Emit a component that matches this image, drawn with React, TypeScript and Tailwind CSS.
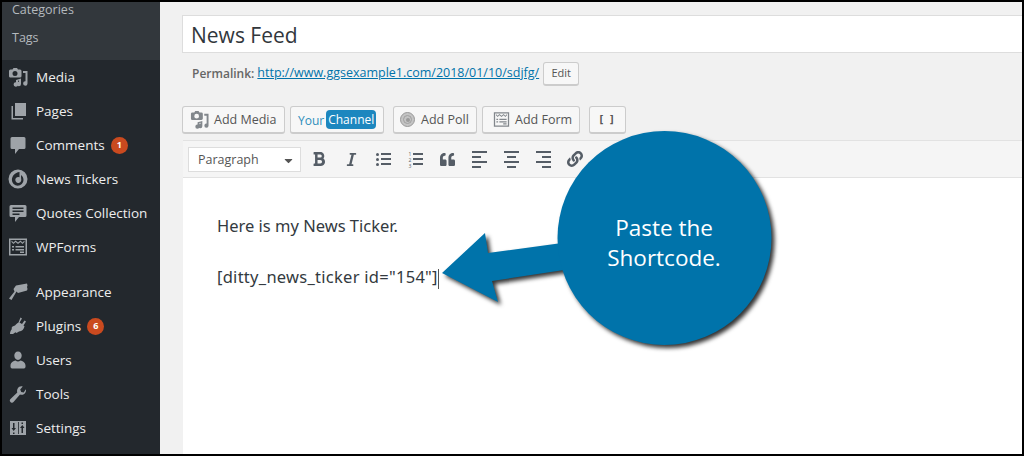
import React from 'react';
import { FaBold, FaItalic, FaQuoteLeft, FaLink, FaCaretDown } from 'react-icons/fa';

const ic = 'w-5 h-5 text-[#9ea3a8] fill-current';

// --- Dashicon style drawings ---
const MediaIcon = ({ className = ic }: { className?: string }) => (
  <svg viewBox="0 0 20 20" className={className}>
    <path fillRule="evenodd" d="M2.500 2.500h2l1-1.500h3.500l1 1.500h2a1.500 1.500 0 0 1 1.500 1.500v5a1.500 1.500 0 0 1-1.500 1.500h-10A1.500 1.500 0 0 1 1 9V4a1.500 1.500 0 0 1 1.500-1.500zM7 4a2.500 2.500 0 1 0 0 5 2.500 2.500 0 0 0 0-5z" />
    <path d="M15 4h4.500v12.500a2.200 2.200 0 1 1-2-2.200V6H15zM8 13l5-1.500v5.500a2.200 2.200 0 1 1-2-2.200v-1.300l-1 .3v3.700a2.200 2.200 0 1 1-2-2.200z" />
  </svg>
);
const PagesIcon = () => (
  <svg viewBox="0 0 20 20" className={ic}>
    <path d="M7 2h11v13H7z" />
    <path d="M5 5v12h10v1.500H3.500V5z" />
  </svg>
);
const CommentIcon = () => (
  <svg viewBox="0 0 20 20" className={ic}>
    <path d="M4 2h12a1.500 1.500 0 0 1 1.500 1.500v9A1.500 1.500 0 0 1 16 14h-5l-4 5v-5H4a1.500 1.500 0 0 1-1.500-1.500v-9A1.500 1.500 0 0 1 4 2z" />
  </svg>
);
const TickerIcon = () => (
  <svg viewBox="0 0 20 20" className={ic}>
    <path fillRule="evenodd" d="M10 .5a9.500 9.500 0 1 1 0 19 9.500 9.500 0 0 1 0-19zM11.500 3v5.200a3 3 0 1 0 1.800 2.800c0-1-.3-1.500-.3-5 1.500 1 2.500 2.800 2.500 5a5.800 5.800 0 0 1-11.600 0c0-4 3-7.500 7.600-8z" />
  </svg>
);
const QuotesIcon = () => (
  <svg viewBox="0 0 20 20" className={ic}>
    <path fillRule="evenodd" d="M3 2h14a1.500 1.500 0 0 1 1.500 1.500v9A1.500 1.500 0 0 1 17 14h-6l-4 5v-5H3a1.500 1.500 0 0 1-1.500-1.500v-9A1.500 1.500 0 0 1 3 2zm1.500 2.500V6h11V4.500zm0 3V9h11V7.500zm0 3V12h7v-1.500z" />
  </svg>
);
const FormsIcon = ({ className = ic }: { className?: string }) => (
  <svg viewBox="0 0 20 20" className={className}>
    <path fillRule="evenodd" d="M1 1.500h18v17H1zm1.500 1.500v14h15V3zm1 .5 2 2 2-2 2.500 2 2.500-2 2 2 2-2v1.500l-2 2-2-2-2.500 2-2.500-2-2 2-2-2zM4 9h2v1.500H4zm3.500 0H16v1.500H7.500zM4 12h2v1.500H4zm3.500 0H16v1.500H7.500zM12 14.500h4V16h-4z" />
  </svg>
);
const BrushIcon = () => (
  <svg viewBox="0 0 20 20" className={ic}>
    <path d="M8 3.500 19 1.500l.5 2-.5 1.500.5 2-.5 1.500-9 2.500-1.500-1.500L3.500 18 1 16.500 6.500 9.500 5.500 7z" />
  </svg>
);
const PlugIcon = () => (
  <svg viewBox="0 0 20 20" className={ic}>
    <path d="M12.500 1.500l1.500 1-2.500 4 2.500 1.500 2.500-3.500 1.500 1-2.500 4 1 .8c-.5 3-2.500 5-5.500 5.200l-2.500 1.500-1-.8L5 18H2c0-2.500 1-4 2-5l-.5-1 1-1.500L7 9.500c1.500-2 3.500-3 3.500-3z" />
  </svg>
);
const UserIcon = () => (
  <svg viewBox="0 0 20 20" className={ic}>
    <path d="M10 1.500c2.300 0 3.700 1.700 3.700 4S12.300 10 10 10 6.300 7.800 6.300 5.500s1.400-4 3.700-4zM2.500 15.500c0-3 3-4.500 5-5 .8.700 1.600 1 2.500 1s1.700-.3 2.500-1c2 .5 5 2 5 5V17c0 .8-1 1.500-2 1.500H4.500c-1 0-2-.7-2-1.500z" />
  </svg>
);
const WrenchIcon = () => (
  <svg viewBox="0 0 20 20" className={ic}>
    <path d="M17.800 5.200c.6 2-.2 4-2 5-1.300.7-2.700.7-3.800.2L5.500 18a2 2 0 0 1-3.200-.3 2 2 0 0 1 .2-2.700l6.800-6.500c-.5-1.200-.3-2.700.4-4 1-1.700 3-2.600 5-2l-2.500 3 1 2.500 2.500.5z" />
  </svg>
);
const SettingsIcon = () => (
  <svg viewBox="0 0 20 20" className={ic}>
    <path fillRule="evenodd" d="M2 3h16v14H2zm3 2v5H3.500L5.700 13 8 10H6.500V5zm0 9.500V16h1.500v-1.500zM13.500 15h1.500v-5h1.500l-2.200-3L12 10h1.500zM13.500 4.500V6H15V4.500zM10 4h.8v12H10z" />
  </svg>
);

const menuTop = [
  { label: 'Media', icon: <MediaIcon /> },
  { label: 'Pages', icon: <PagesIcon /> },
  { label: 'Comments', icon: <CommentIcon />, badge: '1' },
  { label: 'News Tickers', icon: <TickerIcon /> },
  { label: 'Quotes Collection', icon: <QuotesIcon /> },
  { label: 'WPForms', icon: <FormsIcon /> },
];

const menuBottom = [
  { label: 'Appearance', icon: <BrushIcon /> },
  { label: 'Plugins', icon: <PlugIcon />, badge: '6' },
  { label: 'Users', icon: <UserIcon /> },
  { label: 'Tools', icon: <WrenchIcon /> },
  { label: 'Settings', icon: <SettingsIcon /> },
];

type Item = { label: string; icon: React.ReactNode; badge?: string };

function MenuRow({ item }: { item: Item }) {
  return (
    <div className="h-[34px] flex items-center shrink-0">
      <div className="w-[34px] pr-[2px] flex justify-center shrink-0">{item.icon}</div>
      <span className="text-[13.500px] text-[#eeeeee]">{item.label}</span>
      {item.badge && (
        <span className="ml-[6px] w-[17px] h-[17px] rounded-full bg-[#ca4a1f] text-white text-[9px] font-bold flex items-center justify-center">
          {item.badge}
        </span>
      )}
    </div>
  );
}

function Lines({ widths, align }: { widths: number[]; align: string }) {
  return (
    <div className={`w-[15px] flex flex-col gap-[3px] ${align}`}>
      {widths.map((w, i) => (
        <div key={i} className="h-[2px] bg-[#555d66]" style={{ width: w }} />
      ))}
    </div>
  );
}

function ToolBtn({ children }: { children: React.ReactNode }) {
  return <div className="w-[32px] flex justify-center items-center text-[#555d66]">{children}</div>;
}

function MediaBtn({ children, className }: { children: React.ReactNode; className: string }) {
  return (
    <div className={`h-[28px] flex items-center bg-[#f7f7f7] border border-[#cccccc] border-b-2 rounded-[3px] text-[12.500px] text-[#555555] ${className}`}>
      {children}
    </div>
  );
}

export default function App() {
  return (
    <div className="relative w-[1024px] h-[456px] overflow-hidden border-2 border-black flex bg-[#f1f1f1] font-['Open_Sans',sans-serif]">
      {/* --- SIDEBAR --- */}
      <aside className="w-[158px] shrink-0 bg-[#23282d] flex flex-col">
        <div className="h-[58px] shrink-0 bg-[#32373c] flex flex-col text-[12.500px] leading-none text-[#b4b9be]">
          <div className="h-[16px] shrink-0 flex items-center pl-[10px]">Categories</div>
          <div className="h-[24px] mt-[8px] shrink-0 flex items-center pl-[10px]">Tags</div>
        </div>
        {menuTop.map((item) => (
          <MenuRow key={item.label} item={item} />
        ))}
        <div className="h-[11px] shrink-0" />
        {menuBottom.map((item) => (
          <MenuRow key={item.label} item={item} />
        ))}
      </aside>

      {/* --- MAIN --- */}
      <main className="flex-1 min-w-0 pl-[22px] pt-[13px] flex flex-col">
        <div className="h-[38px] pt-[3px] shrink-0 bg-white border border-r-0 border-[#dddddd] flex items-center pl-[8px] text-[21px] text-[#32373c]">
          News Feed
        </div>

        <div className="h-[23px] mt-[9px] shrink-0 pl-[10px] flex items-center text-[12px] text-[#666666]">
          <b className="font-semibold">Permalink:</b>
          <span className="ml-[3px] text-[#0073aa] underline text-[12.500px]">http://www.ggsexample1.com/2018/01/10/sdjfg/</span>
          <span className="ml-[4px] h-[24px] w-[36px] bg-[#f7f7f7] border border-[#cccccc] border-b-2 rounded-[3px] flex items-center justify-center text-[11px] text-[#555555]">
            Edit
          </span>
        </div>

        <div className="mt-[21px] h-[28px] shrink-0 flex">
          <MediaBtn className="w-[103px] pl-[7px] gap-[5px]">
            <MediaIcon className="w-[19px] h-[19px] text-[#82878c] fill-current" />
            <span className="relative top-[1px]">Add Media</span>
          </MediaBtn>
          <MediaBtn className="w-[94px] ml-[5px] pl-[7px]">
            <span className="text-[12px] text-[#2e8dbb] relative top-[1px]">Your</span>
            <span className="ml-[2px] h-[19px] px-[2px] rounded-[4px] bg-[#1d87bf] text-white text-[12px] flex items-center">Channel</span>
          </MediaBtn>
          <MediaBtn className="w-[84px] ml-[9px] pl-[6px] gap-[6px]">
            <span className="w-[15px] h-[15px] rounded-full bg-[#c4c4c4] border border-[#999999] flex items-center justify-center">
              <span className="w-[9px] h-[9px] rounded-full border border-[#a0a0a0] flex items-center justify-center">
                <span className="w-[4px] h-[4px] rounded-full bg-[#9a9a9a]" />
              </span>
            </span>
            <span className="relative top-[1px]">Add Poll</span>
          </MediaBtn>
          <MediaBtn className="w-[98px] ml-[5px] pl-[10px] gap-[5px]">
            <FormsIcon className="w-[17px] h-[17px] text-[#82878c] fill-current" />
            <span className="relative top-[1px]">Add Form</span>
          </MediaBtn>
          <MediaBtn className="w-[37px] ml-[9px] justify-center">
            <span className="font-bold text-[11px] tracking-[2px]">[ ]</span>
          </MediaBtn>
        </div>

        <div className="mt-[6px] ml-[1px] h-[38px] shrink-0 bg-[#f5f5f5] border-y border-[#e2e2e2] flex items-center pl-[5px]">
          <div className="w-[113px] h-[25px] pt-[2px] bg-white border border-[#dddddd] flex items-center justify-between pl-[9px] pr-[5px] text-[12.500px] text-[#555555]">
            Paragraph
            <FaCaretDown size={13} />
          </div>
          <div className="ml-[2px] flex">
            <ToolBtn><FaBold size={16} /></ToolBtn>
            <ToolBtn><FaItalic size={15} /></ToolBtn>
            <ToolBtn>
              <div className="relative">
                <Lines widths={[10, 10, 10]} align="items-end" />
                <div className="absolute left-0 top-0 w-[3px] h-[3px] bg-[#555d66] rounded-full" />
                <div className="absolute left-0 top-[5px] w-[3px] h-[3px] bg-[#555d66] rounded-full" />
                <div className="absolute left-0 top-[10px] w-[3px] h-[3px] bg-[#555d66] rounded-full" />
              </div>
            </ToolBtn>
            <ToolBtn>
              <div className="relative">
                <Lines widths={[10, 10, 10]} align="items-end" />
                <div className="absolute left-[1px] top-[-2px] text-[5px] leading-[6px] text-[#555d66]">1<br />2<br />3</div>
              </div>
            </ToolBtn>
            <ToolBtn><FaQuoteLeft size={15} /></ToolBtn>
            <ToolBtn><Lines widths={[15, 9, 15, 9]} align="items-start" /></ToolBtn>
            <ToolBtn><Lines widths={[15, 9, 15, 9]} align="items-center" /></ToolBtn>
            <ToolBtn><Lines widths={[15, 9, 15, 9]} align="items-end" /></ToolBtn>
            <ToolBtn><FaLink size={16} /></ToolBtn>
          </div>
        </div>

        <div className="flex-1 ml-[1px] bg-white pl-[34px] pt-[36px] text-[16.500px] leading-[24px] text-[#333a40] font-['Noto_Sans',sans-serif]">
          <p>Here is my News Ticker.</p>
          <p className="mt-[27px] tracking-[0.27px]">
            [ditty_news_ticker id="154"]<span className="inline-block w-px h-[20px] bg-[#555555] align-middle" />
          </p>
        </div>
      </main>

      {/* --- CALLOUT --- */}
      <svg
        viewBox="0 0 1024 456"
        className="absolute left-[-2px] top-[-2px] w-[1024px] h-[456px] pointer-events-none drop-shadow-[3px_3px_2px_rgba(0,0,0,0.8)]"
      >
        <path fill="#0073aa" d="M442 273 485 233 488 253 562 243 564 270 492 281 498 302Z" />
        <circle cx="664.500" cy="238" r="107" fill="#0073aa" />
      </svg>
      <div className="absolute left-[555px] top-[211px] w-[214px] text-center text-white text-[22.500px] leading-[30px] font-['Open_Sans',sans-serif]">
        Paste the
        <br />
        Shortcode.
      </div>
    </div>
  );
}
